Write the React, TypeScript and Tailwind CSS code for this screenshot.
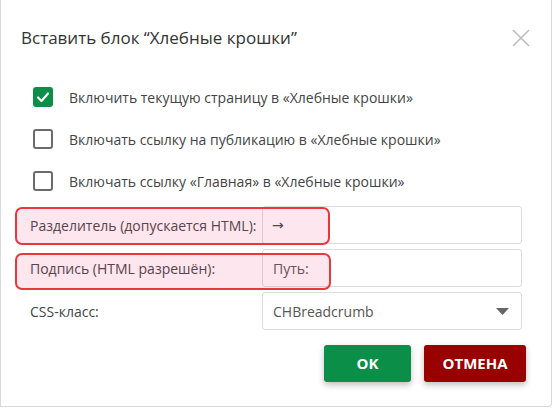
function Checkbox({ checked }: { checked?: boolean }) {
  if (checked) {
    return (
      <div className="w-5 h-5 rounded-[3px] bg-[#0b8e48] flex items-center justify-center">
        <svg width="14" height="14" viewBox="0 0 14 14" fill="none">
          <path d="M2 7.5 L5.5 11 L12 3.5" stroke="#fff" strokeWidth="2.2" strokeLinecap="round" strokeLinejoin="round" />
        </svg>
      </div>
    )
  }
  return <div className="w-5 h-5 rounded-[3px] border-2 border-[#6b6b6b] bg-white" />
}

const options = [
  { label: "Включить текущую страницу в «Хлебные крошки»", checked: true },
  { label: "Включать ссылку на публикацию в «Хлебные крошки»", checked: false },
  { label: "Включать ссылку «Главная» в «Хлебные крошки»", checked: false },
]

export default function App() {
  return (
    <div className="relative w-[553px] h-[408px] bg-white font-['Open_Sans',sans-serif] text-[#333] overflow-hidden">
      <div className="w-[552px] h-[407px] flex flex-col border-l border-r border-b border-[#d9d9d9] rounded-br-[4px] bg-white">
        {/* header */}
        <div className="flex justify-between items-start pl-5 pr-[21px] pt-[24px]">
          <div className="text-[17px] leading-[28px] text-[#333]">Вставить блок “Хлебные крошки”</div>
          <svg width="18" height="18" viewBox="0 0 18 18" className="mt-[5px]">
            <path d="M1 1 L17 17 M17 1 L1 17" stroke="#bdbdbd" strokeWidth="1.6" />
          </svg>
        </div>

        {/* checkboxes */}
        <div className="mt-[24px] pl-8">
          {options.map((o) => (
            <div key={o.label} className="h-[42px] flex items-center gap-4">
              <Checkbox checked={o.checked} />
              <span className="text-[14px] text-[#444]">{o.label}</span>
            </div>
          ))}
        </div>

        {/* fields */}
        <div className="mt-[4px] flex flex-col gap-[5px] pl-[29px] pr-[29px]">
          <div className="flex items-center h-[38px]">
            <div className="w-[232px] text-[14px] text-[#444]">Разделитель (допускается HTML):</div>
            <div className="flex-1 h-full border border-[#dcdcdc] rounded-[3px] flex items-center px-[9px] text-[14px] text-[#444] font-['DejaVu_Sans',sans-serif]">→</div>
          </div>
          <div className="flex items-center h-[38px]">
            <div className="w-[232px] text-[14px] text-[#444]">Подпись (HTML разрешён):</div>
            <div className="flex-1 h-full border border-[#dcdcdc] rounded-[3px] flex items-center px-[10px] text-[14px] text-[#555]">Путь:</div>
          </div>
          <div className="flex items-center h-[38px]">
            <div className="w-[232px] text-[14px] text-[#444]">CSS-класс:</div>
            <div className="flex-1 h-full border border-[#dcdcdc] rounded-[3px] flex items-center justify-between pl-[10px] pr-[12px] text-[14px] text-[#555]">
              <span>CHBreadcrumb</span>
              <svg width="13" height="7" viewBox="0 0 13 7">
                <path d="M0 0 L13 0 L6.5 7 Z" fill="#666" />
              </svg>
            </div>
          </div>
        </div>

        {/* footer */}
        <div className="mt-[15px] flex justify-end gap-[13px] pr-[25px]">
          <button className="w-[87px] h-[37px] rounded-[3px] bg-[#0b8e48] text-white font-bold text-[15px] shadow-[0_3px_6px_rgba(0,0,0,0.25)]">
            OK
          </button>
          <button className="w-[102px] h-[37px] rounded-[3px] bg-[#990000] text-white font-bold text-[15px] shadow-[0_3px_6px_rgba(0,0,0,0.25)]">
            ОТМЕНА
          </button>
        </div>
      </div>

      {/* annotation highlights */}
      <div className="absolute left-[15px] top-[207px] w-[315px] h-[38px] rounded-[7px] border-2 border-[#e8383d] bg-[rgba(236,64,122,0.13)]" />
      <div className="absolute left-[15px] top-[253px] w-[316px] h-[37px] rounded-[7px] border-2 border-[#e8383d] bg-[rgba(236,64,122,0.13)]" />
    </div>
  )
}
